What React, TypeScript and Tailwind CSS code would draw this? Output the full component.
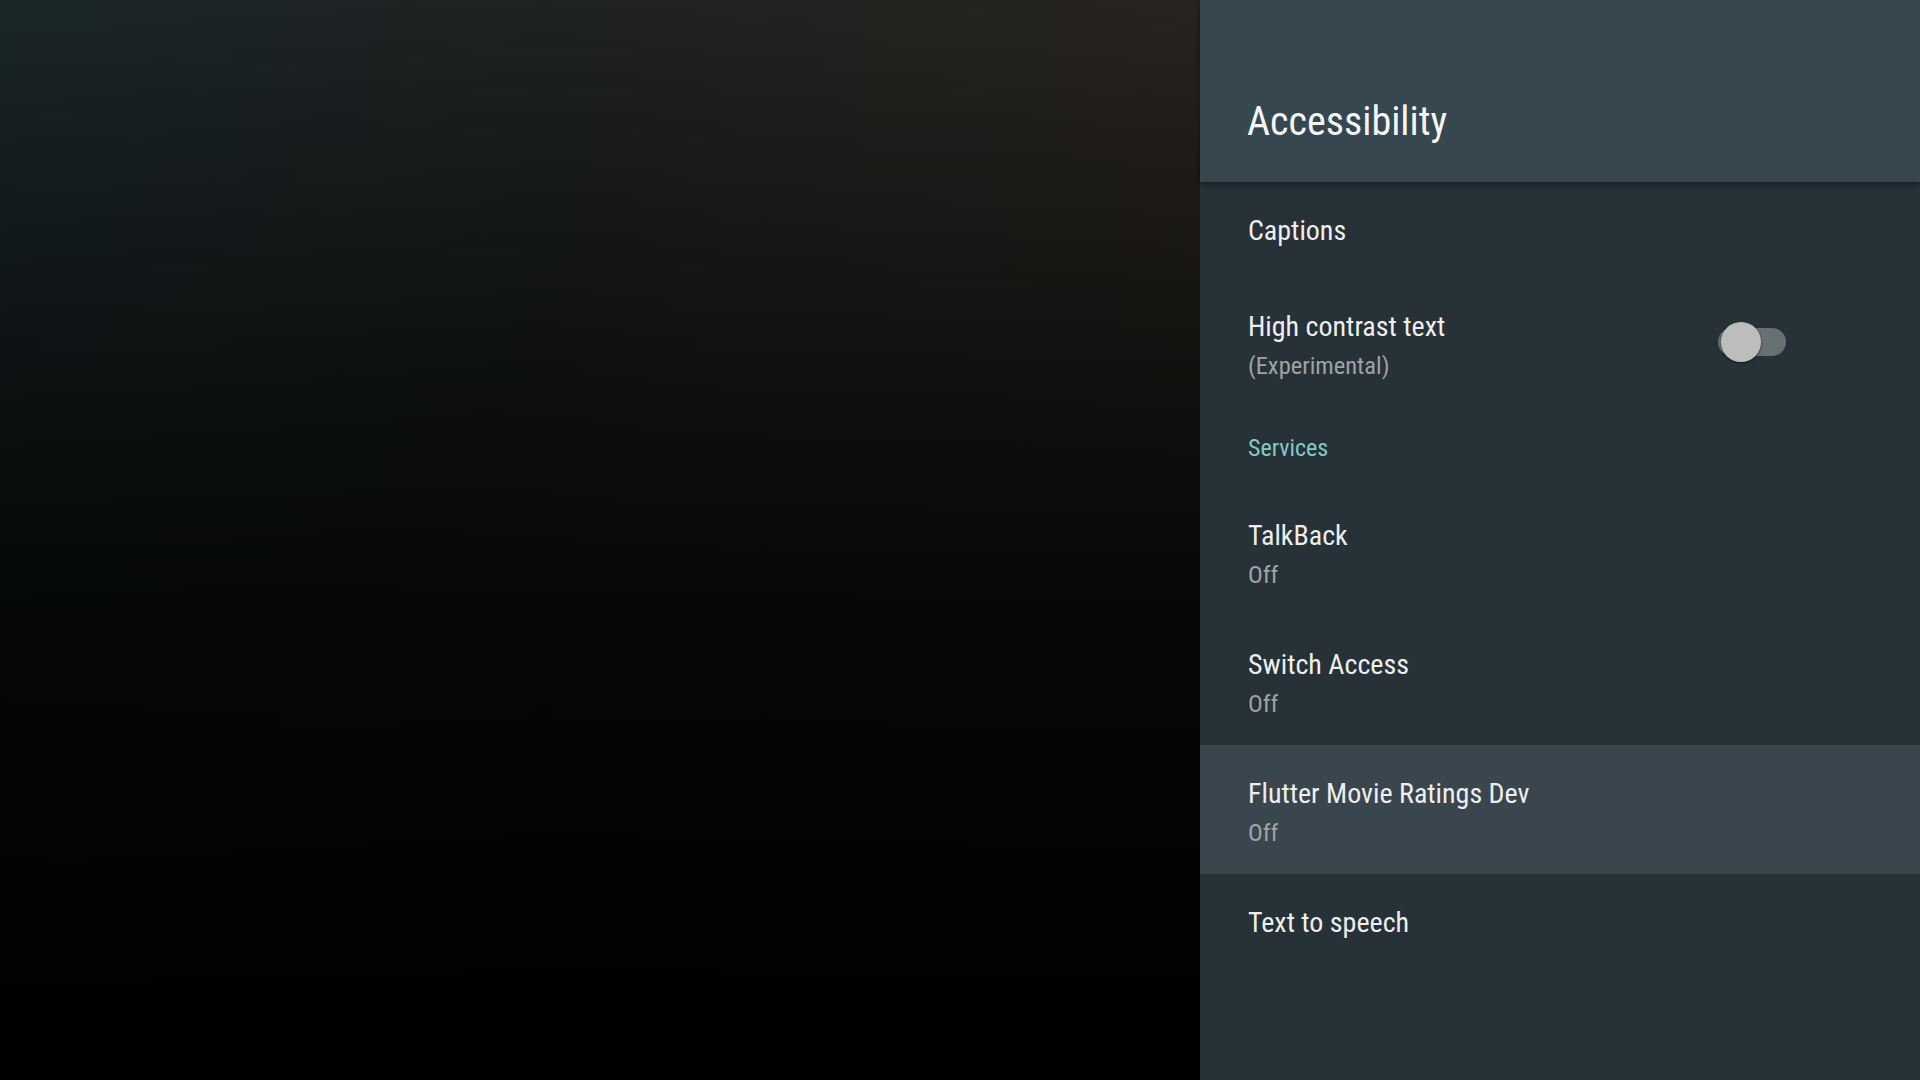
import React from "react";

const font = "font-['Roboto_Condensed','Roboto',sans-serif] font-stretch-condensed";

function Row({ title, summary, highlight, right }: { title: string; summary?: string; highlight?: boolean; right?: React.ReactNode }) {
  return (
    <div
      className={`flex items-start justify-between pl-[48px] pr-[134px] pt-[31px] ${summary ? "h-[129px]" : "h-[96px]"} ${highlight ? "bg-[#3a464d]" : ""}`}
    >
      <div className="flex flex-col">
        <div className="text-[28px] leading-[36px] text-[#eeeeee]">{title}</div>
        {summary && <div className="mt-[5px] text-[24.5px] leading-[32px] text-[#9ea3a6]">{summary}</div>}
      </div>
      {right}
    </div>
  );
}

function Toggle() {
  return (
    <div className="relative mt-[13px] h-[40px] w-[68px]">
      <div className="absolute left-0 top-[6px] h-[28px] w-[68px] rounded-full bg-[#677073]" />
      <div className="absolute left-[3px] top-0 h-[40px] w-[40px] rounded-full bg-[#bdbdbd] shadow-[0_1px_3px_rgba(0,0,0,0.45)]" />
    </div>
  );
}

export default function App() {
  return (
    <div className={`flex h-[1080px] w-[1920px] overflow-hidden ${font}`}>
      <div className="h-full w-[1200px] bg-[linear-gradient(180deg,rgba(0,0,0,0)_0%,rgba(0,0,0,0.5)_32%,rgba(0,0,0,0.82)_58%,#000_100%),linear-gradient(90deg,#1a2628_0%,#1e2222_45%,#28241f_100%)]" />
      <div className="flex h-full w-[720px] flex-col bg-[#263238]">
        <div className="relative z-10 h-[182px] shrink-0 bg-[#37474f] pl-[47px] pt-[98px] shadow-[0_2px_6px_rgba(0,0,0,0.45)]">
          <div className="text-[40px] leading-[48px] text-[#f5f5f5]">Accessibility</div>
        </div>
        <Row title="Captions" />
        <Row title="High contrast text" summary="(Experimental)" right={<Toggle />} />
        <div className="h-[80px] pl-[48px] pt-[25px]">
          <div className="text-[24px] leading-[32px] text-[#80cbc4]">Services</div>
        </div>
        <Row title="TalkBack" summary="Off" />
        <Row title="Switch Access" summary="Off" />
        <Row title="Flutter Movie Ratings Dev" summary="Off" highlight />
        <Row title="Text to speech" />
      </div>
    </div>
  );
}
